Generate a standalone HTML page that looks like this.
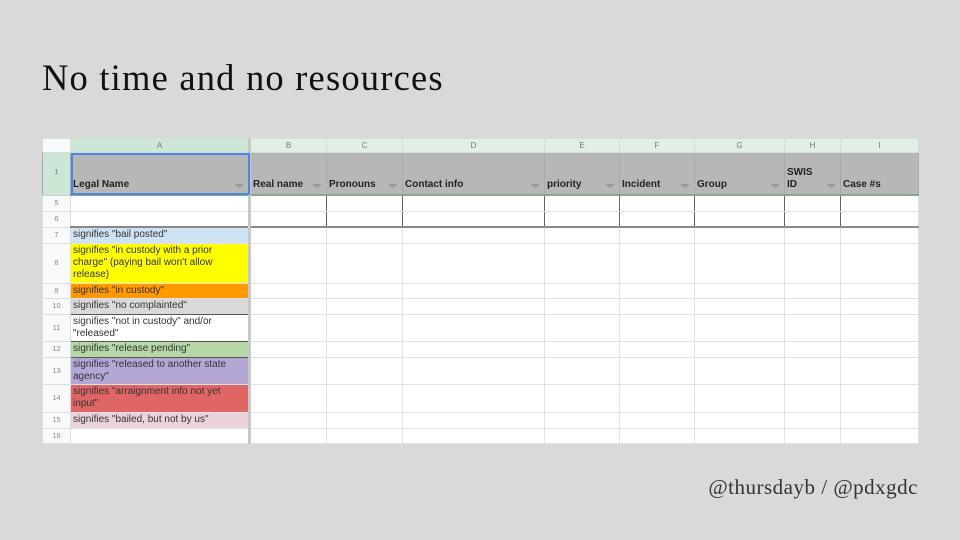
<!DOCTYPE html>
<html><head><meta charset="utf-8"><style>
body{margin:0;width:960px;height:540px;background:#d9d9d9;position:relative;overflow:hidden;font-family:"Liberation Sans",Arial,sans-serif}
.title{position:absolute;left:42px;top:56px;font:36.5px "Liberation Serif",serif;letter-spacing:1.2px;color:#111}
.foot{position:absolute;right:42px;top:475px;font:21px "Liberation Serif",serif;letter-spacing:0.5px;color:#333}
table{position:absolute;left:42px;top:138px;width:876px;border-collapse:collapse;table-layout:fixed;background:#fff}
td{border:1px solid #e2e2e2;padding:0 2px;font-size:10px;color:#333;line-height:12px;vertical-align:middle;overflow:hidden;white-space:normal}
td.rh{background:#f8f9fa;color:#888;text-align:center;font-size:7.5px;border-color:#ddd}
tr.ch td{background:#e1efe6;color:#777;text-align:center;font-size:8px;height:13px;border-color:#cfe0d4}
tr.ch td.corner{background:#f8f9fa}
tr.ch td.ca{background:#cde6d5}
tr.h td{background:#b7b7b7;font-weight:bold;vertical-align:bottom;padding-bottom:3px;height:38px;border-color:#a9a9a9;border-bottom:2px solid #8aa68f;position:relative;color:#222}
tr.h td.rh{background:#cde6d5;color:#777;font-weight:normal;vertical-align:middle;border-bottom:1px solid #ccc}
.f{position:absolute;right:4px;bottom:6px;width:0;height:0;border-left:5px solid transparent;border-right:5px solid transparent;border-top:4px solid #999}
.bar{border-left:3px solid #c8c8c8 !important}
tr.thick td{border-bottom:2px solid #888}
tr.thick td.rh{border-bottom:1px solid #ddd}
td.v{border-right:1.5px solid #666}
.sel{outline:2px solid #4a86e8;outline-offset:-2px}
</style></head><body>
<div class="title">No time and no resources</div>
<table>
<colgroup><col style="width:28px"><col style="width:179px"><col style="width:77px"><col style="width:76px"><col style="width:142px"><col style="width:75px"><col style="width:75px"><col style="width:90px"><col style="width:56px"><col style="width:78px"></colgroup>
<tr class="ch"><td class="corner"></td><td class="ca">A</td><td class="bar">B</td><td>C</td><td>D</td><td>E</td><td>F</td><td>G</td><td>H</td><td>I</td></tr>
<tr class="h"><td class="rh">1</td><td class="sel">Legal Name<span class="f"></span></td><td class="bar">Real name<span class="f"></span></td><td>Pronouns<span class="f"></span></td><td>Contact info<span class="f"></span></td><td>priority<span class="f"></span></td><td>Incident<span class="f"></span></td><td>Group<span class="f"></span></td><td>SWIS<br>ID<span class="f"></span></td><td>Case #s</td></tr>
<tr style="height:16px"><td class="rh">5</td><td></td><td class="bar v"></td><td class="v"></td><td class="v"></td><td class="v"></td><td class="v"></td><td class="v"></td><td class="v"></td><td></td></tr>
<tr class="thick" style="height:16px"><td class="rh">6</td><td></td><td class="bar v"></td><td class="v"></td><td class="v"></td><td class="v"></td><td class="v"></td><td class="v"></td><td class="v"></td><td></td></tr>
<tr style="height:16px"><td class="rh">7</td><td style="background:#cfe2f3">signifies "bail posted"</td><td class="bar"></td><td></td><td></td><td></td><td></td><td></td><td></td><td></td></tr>
<tr style="height:40px"><td class="rh">8</td><td style="background:#ffff00">signifies "in custody with a prior charge" (paying bail won't allow release)</td><td class="bar"></td><td></td><td></td><td></td><td></td><td></td><td></td><td></td></tr>
<tr style="height:15px"><td class="rh">9</td><td style="background:#ff9900">signifies "in custody"</td><td class="bar"></td><td></td><td></td><td></td><td></td><td></td><td></td><td></td></tr>
<tr style="height:16px"><td class="rh">10</td><td style="background:#d9d9d9;border:1px solid #555">signifies "no complainted"</td><td class="bar"></td><td></td><td></td><td></td><td></td><td></td><td></td><td></td></tr>
<tr style="height:27px"><td class="rh">11</td><td style="border:1px solid #555">signifies "not in custody" and/or "released"</td><td class="bar"></td><td></td><td></td><td></td><td></td><td></td><td></td><td></td></tr>
<tr style="height:16px"><td class="rh">12</td><td style="background:#b6d7a8;border:1px solid #555">signifies "release pending"</td><td class="bar"></td><td></td><td></td><td></td><td></td><td></td><td></td><td></td></tr>
<tr style="height:27px"><td class="rh">13</td><td style="background:#b4a7d6">signifies "released to another state agency"</td><td class="bar"></td><td></td><td></td><td></td><td></td><td></td><td></td><td></td></tr>
<tr style="height:28px"><td class="rh">14</td><td style="background:#e06666">signifies "arraignment info not yet input"</td><td class="bar"></td><td></td><td></td><td></td><td></td><td></td><td></td><td></td></tr>
<tr style="height:16px"><td class="rh">15</td><td style="background:#ead1dc">signifies "bailed, but not by us"</td><td class="bar"></td><td></td><td></td><td></td><td></td><td></td><td></td><td></td></tr>
<tr style="height:15px"><td class="rh">16</td><td></td><td class="bar"></td><td></td><td></td><td></td><td></td><td></td><td></td><td></td></tr>
</table>
<div class="foot">@thursdayb / @pdxgdc</div>
</body></html>
